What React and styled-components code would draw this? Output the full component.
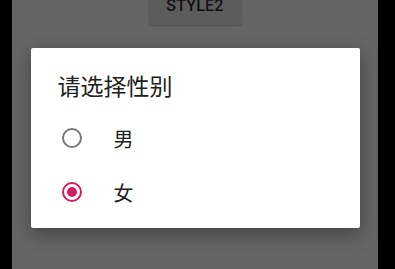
import styled, { createGlobalStyle } from 'styled-components';

const GlobalStyle = createGlobalStyle`
  html, body {
    margin: 0;
    padding: 0;
    background: #000;
    overflow: hidden;
  }
  body {
    font-family: Roboto, "Noto Sans CJK SC", sans-serif;
  }
`;

const Screen = styled.div`
  width: 366px;
  height: 269px;
  margin-left: 12px;
  background: #656565;
  display: flex;
  flex-direction: column;
  align-items: center;
  overflow: hidden;
`;

const StyleButton = styled.div`
  width: 93px;
  height: 40px;
  margin-top: -15px;
  background: #5c5c5c;
  box-shadow: 0 1px 2px rgba(0, 0, 0, 0.2);
  border-radius: 2px;
  display: flex;
  align-items: center;
  justify-content: center;
  font-family: Roboto, sans-serif;
  font-weight: 500;
  font-size: 16px;
  letter-spacing: 0.2px;
  color: #121212;
`;

const Dialog = styled.div`
  width: 329px;
  height: 180px;
  margin-top: 23px;
  box-sizing: border-box;
  background: #fff;
  border-radius: 2px;
  box-shadow: 0 6px 18px rgba(0, 0, 0, 0.35);
  padding: 22px 0 9px;
  display: flex;
  flex-direction: column;
`;

const Title = styled.div`
  padding-left: 27px;
  height: 30px;
  line-height: 30px;
  margin-bottom: 11px;
  font-family: "Noto Sans CJK SC", sans-serif;
  font-size: 23px;
  color: #212121;
`;

const Option = styled.div`
  height: 54px;
  display: flex;
  align-items: center;
  padding-left: 31px;
  gap: 32px;
`;

const Label = styled.span`
  font-family: "Noto Sans CJK SC", sans-serif;
  font-size: 20px;
  color: #212121;
`;

const Radio = ({ checked }) => (
  <svg width="20" height="20" viewBox="0 0 20 20">
    <circle
      cx="10"
      cy="10"
      r="9"
      fill="none"
      stroke={checked ? '#d81b60' : '#777'}
      strokeWidth="2"
    />
    {checked && <circle cx="10" cy="10" r="5" fill="#d81b60" />}
  </svg>
);

const options = [
  { label: '男', checked: false },
  { label: '女', checked: true },
];

export default function App() {
  return (
    <>
      <GlobalStyle />
      <Screen>
        <StyleButton>STYLE2</StyleButton>
        <Dialog>
          <Title>请选择性别</Title>
          {options.map((o) => (
            <Option key={o.label}>
              <Radio checked={o.checked} />
              <Label>{o.label}</Label>
            </Option>
          ))}
        </Dialog>
      </Screen>
    </>
  );
}
